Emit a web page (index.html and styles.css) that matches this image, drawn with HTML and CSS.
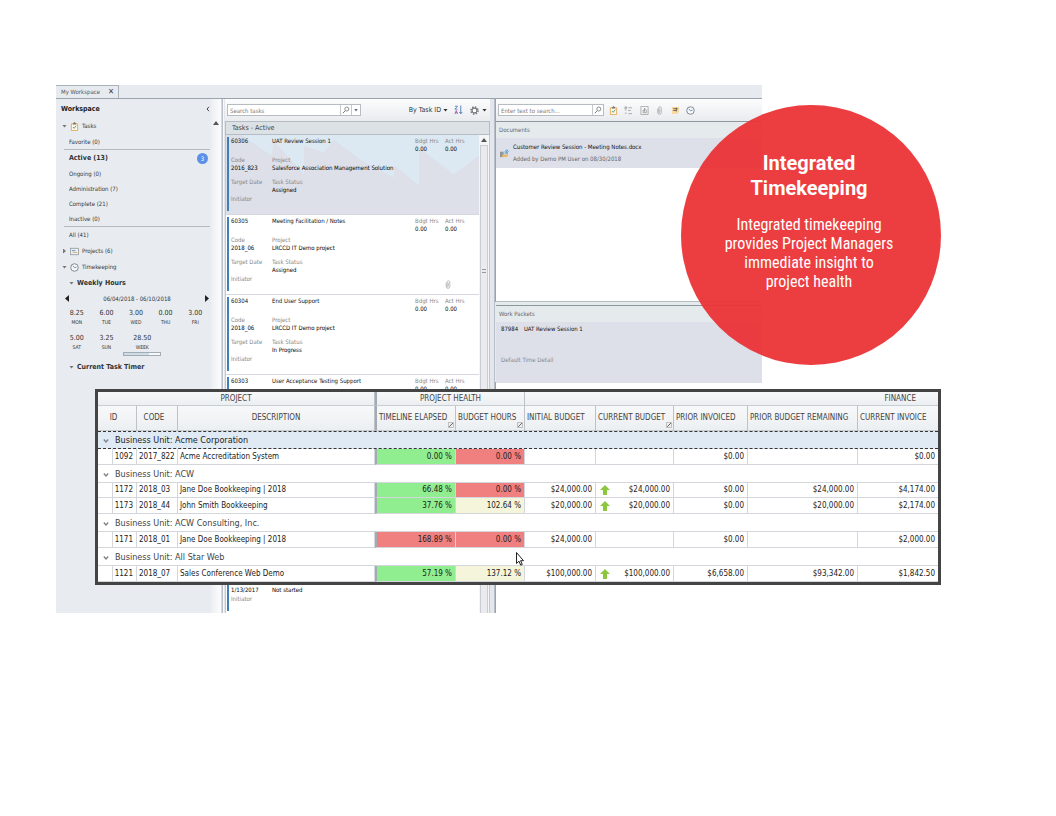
FILE: index.html
```html
<!DOCTYPE html>
<html lang="en">
<head>
<meta charset="utf-8">
<title>Integrated Timekeeping</title>
<link rel="stylesheet" href="styles.css">
</head>
<body>
<svg class="defs" aria-hidden="true">
  <symbol id="clip" viewBox="0 0 10 10"><path d="M1.5 2h7v7.5h-7z" fill="#fff8ec" stroke="#e3a751"/><path d="M3.5 2.5v-1h1V.6h1v.9h1v1z" fill="#777" stroke="#777" stroke-width=".5"/><path d="M3.3 5.6l1.3 1.5 2.3-3" fill="none" stroke="#4c927e"/></symbol>
  <symbol id="clock" viewBox="0 0 10 10"><circle cx="5" cy="5" r="4.2" fill="#f6f8fa" stroke="#6d7379" stroke-width=".9"/><path d="M3 3.2L5 5.2l2.3-.6" fill="none" stroke="#4778a8" stroke-width=".9"/></symbol>
  <symbol id="search" viewBox="0 0 10 10"><circle cx="6" cy="3.8" r="2.5" fill="none" stroke="#666" stroke-width=".9"/><path d="M4.2 5.8L1 9" stroke="#666" stroke-width="1.1"/></symbol>
  <symbol id="attach" viewBox="0 0 6 10"><path d="M1 3v4.3a2 2 0 0 0 4 0V2.4a1.5 1.5 0 0 0-3 0v4.4a.6.6 0 0 0 1.3 0V3" fill="none" stroke="#999" stroke-width=".7"/></symbol>
  <symbol id="up" viewBox="0 0 10 10"><path d="M5 0l5 5H7v5H3V5H0z" fill="#8cc63f"/></symbol>
  <symbol id="edit" viewBox="0 0 6 6"><path d="M.5.5h5v5h-5z" fill="#eee" stroke="#aaa" stroke-width=".7"/><path d="M1.2 4.8L5 1" stroke="#666" stroke-width="1"/></symbol>
  <symbol id="chev" viewBox="0 0 6 6"><path d="M.8 1.5L3 4l2.2-2.5" fill="none" stroke="#7c8187" stroke-width="1.3"/></symbol>
</svg>
<main class="slide">
  <section class="app">
    <nav class="tabs"><button class="tab">My Workspace <b>✕</b></button></nav>
    <div class="cols">
      <aside class="side">
        <div class="tree">
          <h2 class="side-title">Workspace <svg viewBox="0 0 4 6"><path d="M3 .8L1 3l2 2.2" fill="none" stroke="#444"/></svg></h2>
          <a class="node" href="#"><i class="down"></i><svg><use href="#clip"/></svg>Tasks</a>
          <a class="item" href="#">Favorite (0)</a>
          <a class="item line strong" href="#">Active (13)<span class="badge">3</span></a>
          <a class="item" href="#">Ongoing (0)</a>
          <a class="item" href="#">Administration (7)</a>
          <a class="item" href="#">Complete (21)</a>
          <a class="item" href="#">Inactive (0)</a>
          <a class="item line" href="#">All (41)</a>
          <a class="node" href="#"><i class="right"></i><svg viewBox="0 0 10 10"><path d="M.5 1v8M.5 1.5h9v7h-9" fill="#edf1f4" stroke="#818a92" stroke-width=".8"/><path d="M2 4h4" stroke="#558fc2"/><path d="M3 6h5" stroke="#dfa55a"/></svg>Projects (6)</a>
          <a class="node" href="#"><i class="down"></i><svg><use href="#clock"/></svg>Timekeeping</a>
          <a class="node sub" href="#"><i class="down"></i>Weekly Hours</a>
          <div class="range"><button class="prev" aria-label="Previous week"></button><span>06/04/2018 - 06/10/2018</span><button class="next" aria-label="Next week"></button></div>
          <div class="hours">
            <div>8.25<small>MON</small></div><div>6.00<small>TUE</small></div><div>3.00<small>WED</small></div><div>0.00<small>THU</small></div><div>3.00<small>FRI</small></div>
            <div>5.00<small>SAT</small></div><div>3.25<small>SUN</small></div><div class="week">28.50<small>WEEK</small><span class="meter"></span></div>
          </div>
          <a class="node sub" href="#"><i class="down"></i>Current Task Timer</a>
        </div>
        <div class="rail"><i class="arrow-up"></i></div>
      </aside>
      <section class="tasks">
        <div class="bar">
          <label class="search"><input type="text" placeholder="Search tasks" aria-label="Search tasks"><svg><use href="#search"/></svg><i class="caret"></i></label>
          <span class="grow"></span>
          <button class="sort">By Task ID <i class="down dark"></i></button>
          <svg class="az" viewBox="0 0 10 10"><path d="M1 .8h3L1 4h3" fill="none" stroke="#4478b8" stroke-width=".9"/><path d="M1 9.5L2.500 5.500 4 9.500M1.500 8h2" fill="none" stroke="#a04f9c" stroke-width=".9"/><path d="M7.500 0v9M5.800 7.200L7.500 9.200 9.200 7.200" fill="none" stroke="#4478b8"/></svg>
          <button class="gear" aria-label="Settings"><svg viewBox="0 0 10 10"><circle cx="5" cy="5" r="3.900" fill="none" stroke="#777" stroke-width="1.800" stroke-dasharray="1.600 1.460"/><circle cx="5" cy="5" r="2.700" fill="#fff" stroke="#777" stroke-width="1.300"/></svg><i class="down dark"></i></button>
        </div>
        <h3 class="list-head">Tasks - Active</h3>
        <div class="list">
          <div class="cards">
            <article class="card picked"><b>60306</b><b>UAT Review Session 1</b><span>Bdgt Hrs<em>0.00</em></span><span>Act Hrs<em>0.00</em></span><span class="r2">Code<em>2016_823</em></span><span class="r2 wide">Project<em>Salesforce Association Management Solution</em></span><span class="r3">Target Date</span><span class="r3 wide">Task Status<em>Assigned</em></span><span class="r4">Initiator</span></article>
            <article class="card"><b>60305</b><b>Meeting Facilitation / Notes</b><span>Bdgt Hrs<em>0.00</em></span><span>Act Hrs<em>0.00</em></span><span class="r2">Code<em>2018_06</em></span><span class="r2 wide">Project<em>LRCCD IT Demo project</em></span><span class="r3">Target Date</span><span class="r3 wide">Task Status<em>Assigned</em></span><span class="r4">Initiator</span><svg class="att"><use href="#attach"/></svg></article>
            <article class="card"><b>60304</b><b>End User Support</b><span>Bdgt Hrs<em>0.00</em></span><span>Act Hrs<em>0.00</em></span><span class="r2">Code<em>2018_06</em></span><span class="r2 wide">Project<em>LRCCD IT Demo project</em></span><span class="r3">Target Date</span><span class="r3 wide">Task Status<em>In Progress</em></span><span class="r4">Initiator</span></article>
            <article class="card"><b>60303</b><b>User Acceptance Testing Support</b><span>Bdgt Hrs<em>0.00</em></span><span>Act Hrs<em>0.00</em></span></article>
            <article class="card"></article>
            <article class="card last"><span class="r3"><br><em>1/13/2017</em></span><span class="r3 wide"><br><em>Not started</em></span><span class="r4">Initiator</span></article>
          </div>
          <div class="scroll"><i class="arrow-up"></i><span class="thumb"></span></div>
        </div>
      </section>
      <section class="detail">
        <div class="bar">
          <label class="search"><input type="text" placeholder="Enter text to search..." aria-label="Search documents"><svg><use href="#search"/></svg></label>
          <div class="tools">
            <svg><use href="#clip"/></svg>
            <svg viewBox="0 0 10 10"><path d="M1 1h2v2H1zM1 4.500h1.500M1 8h2M5 2h4M4.500 5h3M5 8.500h4" fill="none" stroke="#999" stroke-width=".9"/></svg>
            <svg viewBox="0 0 10 10"><path d="M1 .5h8v9H1z" fill="#f6f6f6" stroke="#999" stroke-width=".8"/><path d="M3.500 7.500v-3H5v-2l2 2v3zM5 4.500v2" fill="none" stroke="#888" stroke-width=".8"/></svg>
            <svg><use href="#attach"/></svg>
            <svg viewBox="0 0 10 10"><path d="M1 1h8v5.500L6.500 9H1z" fill="#f8d9a0"/><path d="M2.500 3h5M2.500 5h3.500M6 2v4" stroke="#665c55"/></svg>
            <svg><use href="#clock"/></svg>
          </div>
        </div>
        <div class="pane docs">
          <h4>Documents</h4>
          <div class="doc"><svg viewBox="0 0 10 10"><path d="M0 3h4v6H0z" fill="#8f979d"/><path d="M3 6h6l-1 3H2z" fill="#e9b765"/><path d="M5 4.500h2V2M5.500 3L7.500.8 9.500 3M8 3v3" fill="none" stroke="#4d94cf"/></svg><p>Customer Review Session - Meeting Notes.docx<small>Added by Demo PM User on 08/30/2018</small></p></div>
        </div>
        <div class="pane packets">
          <h4>Work Packets</h4>
          <div class="packet"><p><span>87984</span> <span>UAT Review Session 1</span></p><small>Default Time Detail</small></div>
        </div>
      </section>
    </div>
  </section>

  <div class="callout">
    <h1>Integrated Timekeeping</h1>
    <p>Integrated timekeeping provides Project Managers immediate insight to project health</p>
  </div>

  <section class="finance">
    <table>
      <colgroup><col class="c-ind"><col class="c-id"><col class="c-code"><col><col class="c-time"><col class="c-hrs"><col class="c-init"><col class="c-cur"><col class="c-prior"><col class="c-rem"><col class="c-inv"></colgroup>
      <thead>
        <tr class="h1"><th colspan="4">PROJECT</th><th class="thick" colspan="2">PROJECT HEALTH</th><th class="fin" colspan="5">FINANCE</th></tr>
        <tr class="h2"><th class="id" colspan="2">ID</th><th class="code">CODE</th><th>DESCRIPTION</th><th class="thick l">TIMELINE ELAPSED<svg><use href="#edit"/></svg></th><th class="l">BUDGET HOURS<svg><use href="#edit"/></svg></th><th class="l">INITIAL BUDGET</th><th class="l">CURRENT BUDGET<svg><use href="#edit"/></svg></th><th class="l">PRIOR INVOICED</th><th class="l">PRIOR BUDGET REMAINING</th><th class="l">CURRENT INVOICE</th></tr>
      </thead>
      <tbody>
        <tr class="group sel"><td colspan="11"><svg><use href="#chev"/></svg>Business Unit: Acme Corporation</td></tr>
        <tr><td></td><td>1092</td><td class="l">2017_822</td><td class="l">Acme Accreditation System</td><td class="thick good">0.00 %</td><td class="bad">0.00 %</td><td></td><td></td><td>$0.00</td><td></td><td>$0.00</td></tr>
        <tr class="group"><td colspan="11"><svg><use href="#chev"/></svg>Business Unit: ACW</td></tr>
        <tr class="snug"><td></td><td>1172</td><td class="l">2018_03</td><td class="l">Jane Doe Bookkeeping | 2018</td><td class="thick good">66.48 %</td><td class="bad">0.00 %</td><td>$24,000.00</td><td><svg><use href="#up"/></svg>$24,000.00</td><td>$0.00</td><td>$24,000.00</td><td>$4,174.00</td></tr>
        <tr><td></td><td>1173</td><td class="l">2018_44</td><td class="l">John Smith Bookkeeping</td><td class="thick good">37.76 %</td><td class="warn">102.64 %</td><td>$20,000.00</td><td><svg><use href="#up"/></svg>$20,000.00</td><td>$0.00</td><td>$20,000.00</td><td>$2,174.00</td></tr>
        <tr class="group"><td colspan="11"><svg><use href="#chev"/></svg>Business Unit: ACW Consulting, Inc.</td></tr>
        <tr><td></td><td>1171</td><td class="l">2018_01</td><td class="l">Jane Doe Bookkeeping | 2018</td><td class="thick bad">168.89 %</td><td class="bad">0.00 %</td><td>$24,000.00</td><td></td><td>$0.00</td><td></td><td>$2,000.00</td></tr>
        <tr class="group"><td colspan="11"><svg><use href="#chev"/></svg>Business Unit: All Star Web</td></tr>
        <tr><td></td><td>1121</td><td class="l">2018_07</td><td class="l">Sales Conference Web Demo</td><td class="thick good">57.19 %</td><td class="warn">137.12 %</td><td>$100,000.00</td><td><svg><use href="#up"/></svg>$100,000.00</td><td>$6,658.00</td><td>$93,342.00</td><td>$1,842.50</td></tr>
      </tbody>
    </table>
    <svg class="cursor" viewBox="0 0 8 14"><path d="M.5.5v11l2.500-2.300 1.700 4 1.600-.7-1.700-3.800H7.500z" fill="#fff" stroke="#222"/></svg>
  </section>
</main>
</body>
</html>
```
FILE: styles.css
```css
* { box-sizing: border-box; }
body { margin: 0; background: #fff; color: #333; font: 6px/8px "DejaVu Sans Condensed", "DejaVu Sans", sans-serif; }
h1, h2, h3, h4, p { margin: 0; font: inherit; }
button, input { font: inherit; color: inherit; border: 0; padding: 0; background: none; }
a { color: inherit; text-decoration: none; }
em, i { font-style: normal; }
svg { flex: none; }
.defs { position: absolute; width: 0; height: 0; }

.slide { position: relative; margin: 85px 115px 0 56px; }
.app { margin-right: 179px; background: #e7ebef; }
.tabs { height: 14px; border-bottom: 1px solid #9aa4ad; display: flex; }
.tab { padding: 0 4px 0 5px; border: 1px solid #a9b2ba; border-width: 1px 1px 0 0; display: flex; align-items: center; gap: 8px; color: #555; }
.tab b { font-size: 8px; color: #444; }
.cols { display: grid; grid-template-columns: 167px 272px 1fr; height: 514px; overflow: hidden; }

.side { display: flex; border-right: 1px solid #b7bec8; }
.tree { flex: 1; padding: 0 1px 0 5px; background: #e8ecf0; }
.rail { width: 11px; background: linear-gradient(90deg, #eceff2, #fbfcfd); border-right: 1px solid #d5dae0; display: flex; justify-content: center; padding-top: 22px; }
.arrow-up { display: block; width: 6px; height: 4px; background: #555; clip-path: polygon(50% 0, 100% 100%, 0 100%); }
.side-title { display: flex; align-items: center; justify-content: space-between; height: 19px; font-weight: bold; font-size: 7px; color: #222; }
.side-title svg { width: 4px; height: 6px; }
.node { display: flex; align-items: center; height: 16px; gap: 3px; padding-left: 1px; }
.node svg { width: 9px; height: 9px; }
.sub { padding-left: 8px; font-weight: bold; font-size: 7px; }
.down { width: 5px; height: 3px; background: #777; clip-path: polygon(0 0, 100% 0, 50% 100%); }
.dark { background: #333; }
.right { width: 3px; height: 5px; margin: 0 1px; background: #777; clip-path: polygon(0 0, 100% 50%, 0 100%); }
.item { display: flex; align-items: center; justify-content: space-between; height: 15px; margin-left: 3px; padding: 0 2px 0 5px; }
.line { border-top: 1px solid #b5bbc2; height: 17px; }
.strong { font-weight: bold; font-size: 7px; }
.badge { width: 11px; height: 11px; border-radius: 50%; background: #5b8fe8; color: #fff; font: 6px/11px "DejaVu Sans Condensed", sans-serif; text-align: center; }
.range { display: flex; justify-content: space-between; align-items: center; height: 15px; padding: 0 1px 0 4px; }
.prev, .next { width: 4px; height: 7px; background: #222; clip-path: polygon(100% 0, 100% 100%, 0 50%); }
.next { clip-path: polygon(0 0, 100% 50%, 0 100%); }
.hours { display: grid; grid-template-columns: repeat(5, 1fr); row-gap: 7px; padding-top: 2px; margin-left: 1px; text-align: center; font-size: 7px; line-height: 10px; }
.hours small { display: block; font-size: 5px; line-height: 8px; }
.week { grid-column: 3 / 5; padding-right: 17px; }
.meter { display: block; width: 38px; height: 4px; margin: 1px auto 3px; border: 1px solid #a2acb4; background: linear-gradient(90deg, #cfdbe5 70%, #f6f8fa 70%); }

.bar { display: flex; align-items: center; height: 22px; padding: 0 4px; background: linear-gradient(#fdfdfe, #e9ebee); }
.search { display: flex; align-items: center; height: 12px; border: 1px solid #b6bcc2; background: #fff; }
.search input { width: 113px; height: 10px; padding: 0 2px; border-right: 1px solid #c4c9ce; outline: 0; }
.search input::placeholder { color: #7a7a7a; opacity: 1; }
.search svg { width: 8px; height: 8px; margin: 0 1px; }
.caret { width: 9px; height: 10px; border-left: 1px solid #c4c9ce; display: grid; place-items: center; }
.caret::before { content: ""; width: 4px; height: 3px; background: #666; clip-path: polygon(0 0, 100% 0, 50% 100%); }
.grow { flex: 1; }
.sort { font-size: 7px; display: flex; align-items: center; gap: 2px; }
.az { width: 9px; height: 10px; margin: 0 7px 0 6px; }
.gear { display: flex; align-items: center; gap: 3px; }
.gear svg { width: 9px; height: 9px; }

.tasks { border-right: 1px solid #b7bec8; padding: 0 4px 0 1px; border-left: 1px solid #f8f9fa; background: #e3e7ec; }
.tasks .bar { padding: 0 3px 0 2px; }
.list-head { height: 14px; padding-left: 6px; border: 1px solid #b4bcc4; background: #dce1e5; font-size: 7px; line-height: 13px; color: #444; }
.list { display: flex; border: 1px solid #c3c9d2; border-top: 0; }
.cards { flex: 1; background: #fff; }
.card { position: relative; display: grid; grid-template-columns: 41px 1fr 30px 34px; grid-template-rows: 19px 22px 17px 1fr; height: 80px; padding: 2px 0 0 5px; border-bottom: 1px solid #d5d8e3; color: #888; }
.card::before { content: ""; position: absolute; left: 1px; top: 2px; bottom: 3px; width: 2px; background: #3f80b8; }
.card b { font-weight: normal; color: #111; }
.card em { display: block; color: #000; }
.r2 { grid-row: 2; } .r3 { grid-row: 3; } .r4 { grid-row: 4; }
.wide { grid-column: 2 / 4; }
.picked { background: #dddfe9; }
.picked::after { content: ""; position: absolute; inset: 0 0 0 3px; background: #dcebf5; opacity: .8; clip-path: polygon(5% 0, 17% 26%, 18% 8%, 30% 50%, 30% 14%, 38% 22%, 42% 6%, 52% 30%, 66% 54%, 66% 38%, 76% 64%, 76% 16%, 90% 50%, 100% 26%, 100% 0); }
.picked > * { position: relative; z-index: 1; }
.att { grid-column: 4; grid-row: 4; width: 6px; height: 9px; margin-top: 5px; }
.scroll { width: 10px; background: #f4f5f7; padding-top: 3px; display: flex; flex-direction: column; align-items: center; gap: 3px; }
.thumb { flex: 1; width: 8px; border: 1px solid #c9ccd3; background: linear-gradient(#999, #999) center 123px / 4px 1px no-repeat, linear-gradient(#999, #999) center 126px / 4px 1px no-repeat, #e9ebee; }

.detail { display: flex; flex-direction: column; border-left: 1px solid #9ba5ad; background: #fff; }
.detail .bar { padding: 0 2px; }
.detail .search input { width: 94px; }
.tools { display: flex; justify-content: space-between; width: 86px; margin-left: 5px; }
.tools svg { width: 9px; height: 9px; }
.pane { border-top: 1px solid #8d989e; }
.pane h4 { height: 16px; padding-left: 3px; background: #e5eaed; line-height: 16px; color: #666; }
.docs { height: 181px; border-bottom: 1px solid #b7bec3; }
.doc { display: flex; align-items: center; gap: 4px; height: 30px; padding-left: 4px; background: #dddfe9; color: #111; }
.doc svg { width: 9px; height: 9px; }
.doc small { display: block; margin-top: 4px; color: #666; font-size: 6px; }
.packets { box-shadow: 0 -2px 0 1px #e5eaed; margin-top: 3px; }
.packet { height: 61px; padding: 3px 5px; background: #dddfe9; color: #111; }
.packet span { margin-right: 4px; }
.packet small { display: block; margin-top: 23px; color: #888; font-size: 6px; }

.callout { position: absolute; right: 0; top: 20px; width: 260px; height: 260px; padding: 46px 44px 0 40px; border-radius: 50%; background: rgba(235, 50, 53, .94); color: #fff; text-align: center; }
.callout h1 { padding: 0 20px; font: bold 20px/25px Roboto, sans-serif; }
.callout p { margin-top: 14px; font: 16px/19px "Roboto Condensed", Roboto, sans-serif; }

.finance { position: absolute; left: 39px; right: 0; top: 304px; border: 3px solid #444; background: #fff; }
table { width: 100%; table-layout: fixed; border-collapse: separate; border-spacing: 0; font-size: 8px; line-height: 10px; color: #222; }
th, td { padding: 0; white-space: nowrap; border: 0 solid #d3d7dc; }
th { font-weight: normal; color: #444; border-right: 1px solid #bcc2c8; border-bottom: 1px solid #c8cdd2; background: linear-gradient(#f7f8f9, #eceff2); }
.c-ind { width: 15px; } .c-id { width: 24px; } .c-code { width: 41px; } .c-time { width: 81px; } .c-hrs { width: 69px; } .c-init { width: 71px; } .c-cur { width: 78px; } .c-prior { width: 74px; } .c-rem { width: 110px; } .c-inv { width: 80px; }
.h1 th { height: 14px; }
.h2 th { height: 25px; }
.h2 .id { padding-right: 7px; }
.h2 .code { padding-right: 6px; }
.h2 .l { position: relative; padding-left: 2px; }
.h2 svg { position: absolute; right: 1px; bottom: 2px; width: 6px; height: 6px; }
th.fin { text-align: right; padding-right: 22px; }
td { height: 16px; text-align: right; padding-right: 3px; border-right-width: 1px; border-bottom-width: 1px; }
td:last-child, th:last-child { border-right: 0; }
.l { text-align: left; padding: 0 0 0 2px; }
.thick { border-left: 2px solid #a3abb3; }
.good { background: #90ee90; }
.bad { background: #f08080; }
.warn { background: #f5f5dc; }
td svg { float: left; width: 10px; height: 10px; margin-left: 4px; }
.group td { height: 18px; text-align: left; font-size: 9px; color: #444; }
.group svg { width: 6px; height: 6px; margin: 3px 6px 0 5px; }
.snug td { height: 15px; }
.sel td { background: #dfeaf4; border: 1px dashed #333; border-width: 1px 0; color: #222; }
.cursor { position: absolute; right: 414px; top: 160px; width: 8px; height: 14px; }
```
